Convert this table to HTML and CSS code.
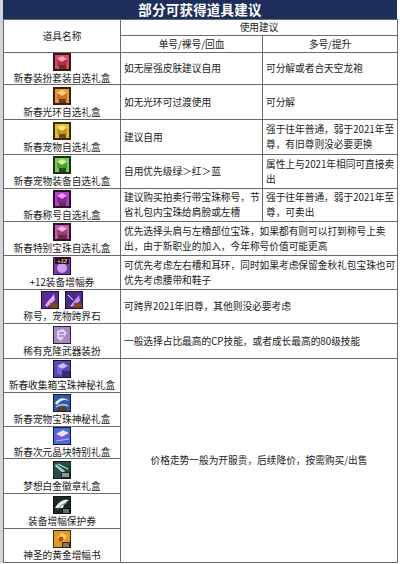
FILE: index.html
```html
<!DOCTYPE html>
<html lang="zh">
<head>
<meta charset="utf-8">
<link rel="stylesheet" href="styles.css">
</head>
<body>
<div class="sheet">
  <div class="title">部分可获得道具建议</div>
  <table class="grid">
    <colgroup><col class="c1"><col class="c2"><col class="c3"></colgroup>
    <tr class="h1"><td rowspan="2" class="ctr">道具名称</td><td colspan="2" class="ctr">使用建议</td></tr>
    <tr class="h2"><td class="ctr">单号/裸号/回血</td><td class="ctr">多号/提升</td></tr>

    <tr class="r32"><td class="item"><svg class="ic" viewBox="0 0 18 18"><rect width="18" height="18" fill="#3a1418"/><rect x="2" y="2" width="14" height="14" fill="#d04c6a"/><path d="M4 6l5-3 5 3-5 3z" fill="#f7a3b6"/><path d="M4 6v6l5 3v-6zM14 6v6l-5 3v-6z" fill="#b0304e"/><rect x="6" y="12" width="7" height="4" fill="#6a2a1c"/></svg><div>新春装扮套装自选礼盒</div></td><td>如无屋强皮肤建议自用</td><td>可分解或者合天空龙袍</td></tr>

    <tr class="r35"><td class="item"><svg class="ic" viewBox="0 0 18 18"><rect width="18" height="18" fill="#3a1e10"/><rect x="2" y="2" width="14" height="14" fill="#e49a3c"/><path d="M4 6l5-3 5 3-5 3z" fill="#ffd27a"/><path d="M4 6v6l5 3v-6zM14 6v6l-5 3v-6z" fill="#c8741e"/><rect x="6" y="12" width="7" height="4" fill="#6a3a1c"/></svg><div>新春光环自选礼盒</div></td><td>如无光环可过渡使用</td><td>可分解</td></tr>

    <tr class="r35"><td class="item"><svg class="ic" viewBox="0 0 18 18"><rect width="18" height="18" fill="#3a2a10"/><rect x="2" y="2" width="14" height="14" fill="#e2bc34"/><path d="M4 6l5-3 5 3-5 3z" fill="#fbe77a"/><path d="M4 6v6l5 3v-6zM14 6v6l-5 3v-6z" fill="#c2941a"/><rect x="6" y="12" width="7" height="4" fill="#6a4a1c"/></svg><div>新春宠物自选礼盒</div></td><td>建议自用</td><td>强于往年普通，弱于2021年至尊，有旧尊则没必要更换</td></tr>

    <tr class="r34"><td class="item"><svg class="ic" viewBox="0 0 18 18"><rect width="18" height="18" fill="#1c3018"/><rect x="2" y="2" width="14" height="14" fill="#7cc85a"/><path d="M4 6l5-3 5 3-5 3z" fill="#c6f29a"/><path d="M4 6v6l5 3v-6zM14 6v6l-5 3v-6z" fill="#4e9a34"/><rect x="6" y="12" width="7" height="4" fill="#2a4a1c"/></svg><div>新春宠物装备自选礼盒</div></td><td>自用优先级绿＞红＞蓝</td><td>属性上与2021年相同可直接卖出</td></tr>

    <tr class="r33"><td class="item"><svg class="ic" viewBox="0 0 18 18"><rect width="18" height="18" fill="#2a1030"/><rect x="2" y="2" width="14" height="14" fill="#b044c4"/><path d="M4 6l5-3 5 3-5 3z" fill="#e79af2"/><path d="M4 6v6l5 3v-6zM14 6v6l-5 3v-6z" fill="#862a9a"/><rect x="6" y="12" width="7" height="4" fill="#6a2a52"/></svg><div>新春称号自选礼盒</div></td><td>建议购买拍卖行带宝珠称号，节省礼包内宝珠给肩膀或左槽</td><td>强于往年普通，弱于2021年至尊，可卖出</td></tr>

    <tr class="r34"><td class="item"><svg class="ic" viewBox="0 0 18 18"><rect width="18" height="18" fill="#301028"/><rect x="2" y="2" width="14" height="14" fill="#c65aa8"/><path d="M4 6l5-3 5 3-5 3z" fill="#f4b2e2"/><path d="M4 6v6l5 3v-6zM14 6v6l-5 3v-6z" fill="#963a80"/><rect x="5" y="12" width="9" height="4" fill="#6a2a3c"/></svg><div>新春特别宝珠自选礼盒</div></td><td colspan="2">优先选择头肩与左槽部位宝珠，如果都有则可以打到称号上卖出，由于新职业的加入，今年称号价值可能更高</td></tr>

    <tr class="r34"><td class="item"><svg class="ic" viewBox="0 0 18 18"><rect width="18" height="18" fill="#20102c"/><rect x="1" y="1" width="16" height="16" fill="#7a3aa8"/><circle cx="9" cy="11" r="5" fill="#c8a0ee"/><path d="M2 1h14v6H2z" fill="#2a1030"/><text x="9" y="6.2" font-size="6" font-weight="700" font-style="italic" fill="#f2c050" text-anchor="middle" font-family="Liberation Sans, sans-serif">+12</text></svg><div>+12装备增幅券</div></td><td colspan="2">可优先考虑左右槽和耳环，同时如果考虑保留金秋礼包宝珠也可优先考虑腰带和鞋子</td></tr>

    <tr class="r34"><td class="item"><div class="icons"><svg class="ic" viewBox="0 0 18 18"><rect width="18" height="18" fill="#1c1030"/><rect x="1" y="1" width="16" height="16" fill="#5a2a9a"/><path d="M4 14L13 3l1 6-8 7z" fill="#d6b0f4"/><rect x="9" y="12" width="8" height="5" fill="#7a4a1c"/></svg><svg class="ic" viewBox="0 0 18 18"><rect width="18" height="18" fill="#1c1030"/><rect x="1" y="1" width="16" height="16" fill="#4a2a8a"/><path d="M5 15L14 4l1 6-8 6z" fill="#c890f0"/><path d="M3 4l5 5" stroke="#ffffff" stroke-width="1"/><rect x="9" y="12" width="8" height="5" fill="#7a4a1c"/></svg></div><div>称号，宠物跨界石</div></td><td colspan="2">可跨界2021年旧尊，其他则没必要考虑</td></tr>

    <tr class="r35"><td class="item"><svg class="ic" viewBox="0 0 18 18"><rect width="18" height="18" fill="#2a2030"/><rect x="1" y="1" width="16" height="16" fill="#a68ac4"/><path d="M4 5l6-2 4 4-6 8-4-3z" fill="#e0d0f2"/><path d="M6 7l5 0M6 10h5" stroke="#7a5a9a" stroke-width="1"/></svg><div>稀有克隆武器装扮</div></td><td colspan="2">一般选择占比最高的CP技能，或者成长最高的80级技能</td></tr>

    <tr class="r34"><td class="item"><svg class="ic" viewBox="0 0 18 18"><rect width="18" height="18" fill="#18103a"/><rect x="1" y="1" width="16" height="16" fill="#5a44b8"/><path d="M4 6l6-3 5 3-6 3z" fill="#c8c0f4"/><path d="M4 6v7l5 3V9z" fill="#7a64d8"/><rect x="9" y="11" width="8" height="6" fill="#3a2a6a"/></svg><div>新春收集箱宝珠神秘礼盒</div></td><td class="merged" colspan="2" rowspan="6">价格走势一般为开服贵，后续降价，按需购买/出售</td></tr>

    <tr class="r34"><td class="item"><svg class="ic" viewBox="0 0 18 18"><rect width="18" height="18" fill="#101a3a"/><rect x="1" y="1" width="16" height="16" fill="#2a5aa8"/><path d="M2 9c4-6 10-6 14-2-4-2-9-1-12 4z" fill="#eaf2ff"/><path d="M3 13c4-3 8-3 12-1" stroke="#9ac4f4" stroke-width="1.5" fill="none"/><rect x="4" y="13" width="10" height="4" fill="#6a3a1c"/></svg><div>新春宠物宝珠神秘礼盒</div></td></tr>

    <tr class="r32"><td class="item"><svg class="ic" viewBox="0 0 18 18"><rect width="18" height="18" fill="#101a3a"/><rect x="1" y="1" width="16" height="16" fill="#4a6ad8"/><path d="M3 7l7-4 6 3-7 4z" fill="#e6e0ff"/><path d="M3 7v6l6 3v-6zM16 6v6l-7 4v-6z" fill="#7a58d0"/><path d="M3 14l13-2" stroke="#7ad8f0" stroke-width="1"/></svg><div>新春次元晶块特别礼盒</div></td></tr>

    <tr class="r35"><td class="item"><svg class="ic" viewBox="0 0 18 18"><rect width="18" height="18" fill="#10201e"/><rect x="1" y="1" width="16" height="16" fill="#2a4a48"/><path d="M3 3l9 7-2 2-8-7z" fill="#9ad6d0"/><path d="M5 3l10 5" stroke="#dff" stroke-width="1"/><rect x="8" y="11" width="9" height="6" fill="#1a2a2a"/><path d="M9 13h7M9 15h7" stroke="#ffffff" stroke-width="1"/></svg><div>梦想白金徽章礼盒</div></td></tr>

    <tr class="r35"><td class="item"><svg class="ic" viewBox="0 0 18 18"><rect width="18" height="18" fill="#0e1412"/><rect x="1" y="1" width="16" height="16" fill="#1e2a26"/><path d="M2 12c4-7 9-9 14-8-3 2-5 4-6 8z" fill="#e8f0ec"/><path d="M4 14c3-4 6-6 10-7" stroke="#5a7a6a" stroke-width="1" fill="none"/><rect x="9" y="12" width="8" height="5" fill="#0a0a0a"/><path d="M10 14h6M10 16h6" stroke="#ffffff" stroke-width="0.8"/></svg><div>装备增幅保护券</div></td></tr>

    <tr class="r34"><td class="item"><svg class="ic" viewBox="0 0 18 18"><rect width="18" height="18" fill="#3a2408"/><rect x="1" y="1" width="16" height="16" fill="#e29a22"/><path d="M4 8l5-5 5 3-4 6z" fill="#fbd070"/><circle cx="8" cy="9" r="2.5" fill="#a85a10"/><rect x="9" y="12" width="8" height="5" fill="#3a2008"/><path d="M10 14h6M10 16h6" stroke="#ffffff" stroke-width="0.8"/></svg><div>神圣的黄金增幅书</div></td></tr>
  </table>
</div>
</body>
</html>
```
FILE: styles.css
```css
html, body {
  margin: 0;
  padding: 0;
  background: #ffffff;
}
body {
  width: 400px;
  height: 564px;
  overflow: hidden;
  font-family: "Noto Sans CJK SC", "Noto Sans", sans-serif;
  font-size: 9.7px;
  color: #222222;
}
.sheet {
  margin-left: 0;
  width: 397px;
  border-left: 3px solid #d4d4d4;
  box-sizing: border-box;
}
.title {
  height: 19px;
  line-height: 19px;
  background: #1d2d5c;
  color: #ffffff;
  font-weight: 700;
  font-size: 13.5px;
  text-align: center;
  letter-spacing: 0.2px;
}
.grid {
  width: 394px;
  border-collapse: collapse;
  table-layout: fixed;
  border-right: 1px solid #666666;
}
.c1 { width: 117px; }
.c2 { width: 142px; }
.c3 { width: 135px; }
.grid td {
  border: 1px solid #6a6a6a;
  padding: 0 0 0 3px;
  line-height: 15px;
  vertical-align: middle;
  text-align: left;
  overflow: hidden;
}
.grid td.ctr { text-align: center; padding: 0; }
.h1 td { height: 14px; }
.h2 td { height: 16px; }
.grid td.item {
  text-align: center;
  padding: 0;
  line-height: 12px;
}
.ic {
  display: block;
  width: 18px;
  height: 18px;
  margin: 0 auto 1px;
}
.icons {
  display: flex;
  justify-content: center;
  gap: 6px;
}
.icons .ic { margin: 0 0 1px; }
.r32 td { height: 31px; }
.r33 td { height: 32px; }
.r34 td { height: 33px; }
.r35 td { height: 34px; }
.grid td.merged {
  text-align: center;
  padding: 0;
  vertical-align: middle;
}
```
